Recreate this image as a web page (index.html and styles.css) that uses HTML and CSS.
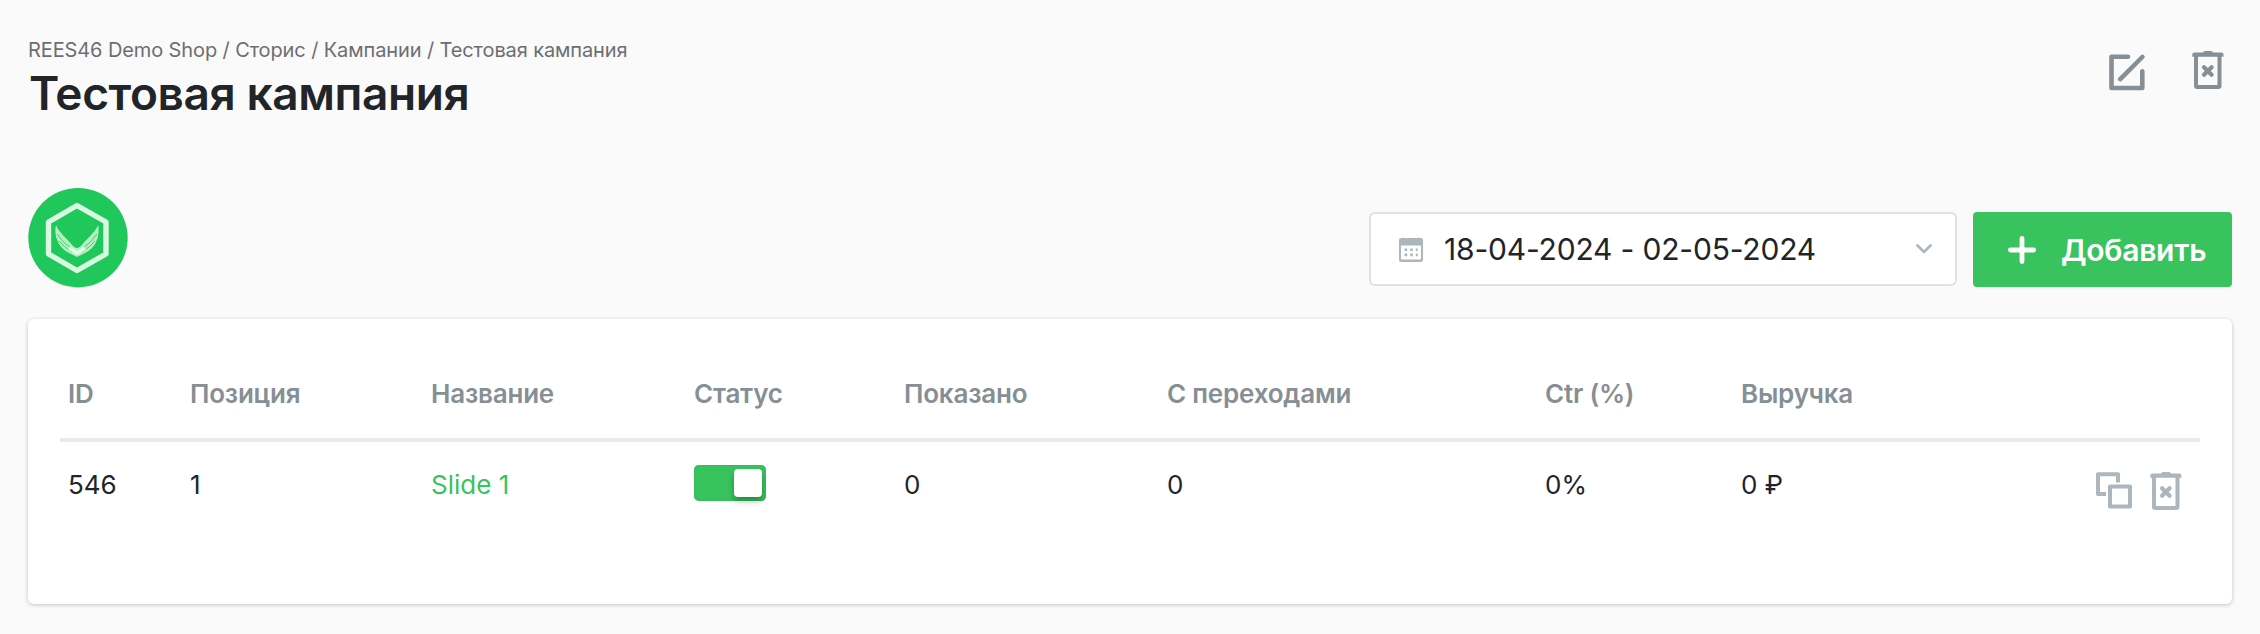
FILE: index.html
```
<!DOCTYPE html>
<html lang="ru">
<head>
<meta charset="utf-8">
<title>Тестовая кампания</title>
<link rel="stylesheet" href="styles.css">
</head>
<body>
<svg class="sprite" width="0" height="0">
  <symbol id="trash" viewBox="0 0 32 38">
    <path fill="currentColor" d="M11 1.5Q11.5 0 13 0H19Q20.5 0 21 1.5H29.5Q31.5 1.5 31.5 3.5V5.8H29.5V35Q29.5 38 26.5 38H5Q2 38 2 35V5.8H.3V3.5Q.3 1.5 2.3 1.5ZM6 5.8V34H25.5V5.8Z" fill-rule="evenodd"/>
    <path fill="none" stroke="currentColor" stroke-width="4.2" stroke-linecap="round" d="M12 16.2L19.6 23.8M19.6 16.2L12 23.8"/>
  </symbol>
</svg>
<header class="header">
  <div>
    <nav class="breadcrumbs">REES46 Demo Shop / Сторис / Кампании / Тестовая кампания</nav>
    <h1 class="title">Тестовая кампания</h1>
  </div>
  <div class="header-actions">
    <svg class="icon-edit" width="36" height="37" viewBox="0 0 36 37" fill="none" stroke="currentColor" stroke-linecap="round" stroke-linejoin="round"><path stroke-width="4.6" d="M19 2.8H2.5V34H33.3V17.3"/><path stroke-width="4.6" d="M11.3 25.2L33.3 3"/></svg>
    <svg class="icon-trash" width="32" height="38"><use href="#trash"/></svg>
  </div>
</header>
<section class="toolbar">
  <svg class="logo" width="100" height="100" viewBox="0 0 100 100">
    <circle cx="50" cy="49.7" r="49.7" fill="#20c75a"/>
    <path fill="none" stroke="#d9f9e0" stroke-width="5.4" stroke-linejoin="round" d="M49 17.5L78 34V66L49 82.5L20.5 66V34Z"/>
    <path fill="#b4f0c2" d="M28 37C31 45 40 51 45 58Q49 62 53 58C58 51 67 45 70 37Q72 46 68 54Q65 61 57 65L49 69L41 65Q33 61 30 54Q26 46 28 37Z"/>
    <path fill="none" stroke="#43cf70" stroke-width="1" d="M29 46Q34 54 44 61M31 53Q36 59 44 64M69 46Q64 54 54 61M67 53Q62 59 54 64"/>
    <path fill="none" stroke="#e4fbe9" stroke-width="3.5" d="M41 60L49 65L57 60"/>
  </svg>
  <div class="controls">
    <div class="datepicker">
      <svg class="icon-calendar" width="24" height="25" viewBox="0 0 24 25"><path fill="currentColor" fill-rule="evenodd" d="M3 1Q4 0 5 1H19Q20 0 21 1H22Q24 1 24 3V23Q24 25 22 25H2Q0 25 0 23V3Q0 1 2 1ZM2 8.5V21.5Q2 22.5 3 22.5H21Q22 22.5 22 21.5V8.5Z"/><path stroke="currentColor" stroke-width="2.6" stroke-dasharray="2.6 3" d="M5.6 12.8H18.7M5.6 17.9H18.7"/></svg>
      <span class="date">18-04-2024 - 02-05-2024</span>
      <svg class="icon-chevron" width="16" height="10" viewBox="0 0 16 10" fill="none" stroke="currentColor" stroke-width="2.6" stroke-linecap="round" stroke-linejoin="round"><path d="M1.5 1.5L8 8L14.5 1.5"/></svg>
    </div>
    <button class="add"><svg width="28" height="28" viewBox="0 0 28 28" stroke="#fff" stroke-width="4.8" stroke-linecap="round"><path d="M14 2.4V25.6M2.4 14H25.6"/></svg><span class="add-label">Добавить</span></button>
  </div>
</section>
<main class="card">
  <table class="table">
    <colgroup><col class="c-id"><col class="c-pos"><col class="c-name"><col class="c-status"><col class="c-shown"><col class="c-clicks"><col class="c-ctr"><col class="c-revenue"><col></colgroup>
    <thead><tr><th>ID</th><th>Позиция</th><th>Название</th><th>Статус</th><th>Показано</th><th>С переходами</th><th>Ctr (%)</th><th>Выручка</th><th></th></tr></thead>
    <tbody><tr>
      <td>546</td><td>1</td><td><a class="link">Slide 1</a></td><td><span class="toggle"><span class="knob"></span></span></td><td>0</td><td>0</td><td>0%</td><td>0 ₽</td>
      <td><div class="row-actions">
        <svg width="36" height="37" viewBox="0 0 36 37" fill="none" stroke="currentColor" stroke-width="4" stroke-linejoin="round"><path d="M10 22H2V2.3H22V10.5"/><rect x="14" y="14.5" width="20" height="20"/></svg>
        <svg width="32" height="38"><use href="#trash"/></svg>
      </div></td>
    </tr></tbody>
  </table>
</main>
</body>
</html>
```
FILE: styles.css
```
* { box-sizing: border-box; }
body {
  margin: 0;
  padding: 35px 28px 0;
  min-height: 634px;
  background: #fafafa;
  color: #212529;
  font-family: Inter, "Liberation Sans", sans-serif;
}
svg { display: block; flex: none; }
.sprite { position: absolute; }
.header { display: flex; justify-content: space-between; height: 153px; }
.breadcrumbs { font-size: 20px; line-height: 30px; letter-spacing: -.11px; color: #6c6f72; white-space: nowrap; }
.title { margin: 0; padding-left: 1px; font-size: 46px; line-height: 56px; font-weight: 600; letter-spacing: -.4px; white-space: nowrap; }
.header-actions { display: flex; gap: 47px; padding: 16px 8px 0 0; color: #868e96; }
.icon-edit { margin-top: 3px; }
.toolbar { display: flex; justify-content: space-between; height: 131px; }
.controls { display: flex; gap: 16px; padding-top: 24px; }
.datepicker {
  display: flex;
  align-items: center;
  width: 588px;
  height: 74px;
  padding: 0 23px 0 28px;
  border: 2px solid #dee2e6;
  border-radius: 6px;
  background: #fff;
}
.icon-calendar { color: #adb5bd; }
.date { flex: 1; margin-left: 21px; font-size: 30px; line-height: 40px; letter-spacing: -.18px; white-space: nowrap; }
.icon-chevron { color: #adb5bd; }
.add {
  display: flex;
  align-items: center;
  width: 259px;
  height: 75px;
  padding: 0 0 0 35px;
  border: 0;
  border-radius: 4px;
  background: #38c35f;
  color: #fff;
  font: 600 30px/40px Inter, "Liberation Sans", sans-serif;
}
.add-label { margin-left: 25px; letter-spacing: -.25px; }
.card {
  height: 285px;
  padding: 43px 32px 0;
  border-radius: 6px;
  background: #fff;
  box-shadow: 0 1px 4px rgba(0, 0, 0, .22);
}
.table { width: 2140px; table-layout: fixed; border-collapse: separate; border-spacing: 0; }
.c-id { width: 122px; }
.c-pos { width: 241px; }
.c-name { width: 263px; }
.c-status { width: 210px; }
.c-shown { width: 263px; }
.c-clicks { width: 378px; }
.c-ctr { width: 196px; }
.c-revenue { width: 196px; }
th {
  height: 80px;
  padding: 0 8px 24px;
  border-bottom: 4px solid #e9ecef;
  color: #868e96;
  font-size: 26px;
  line-height: 40px;
  font-weight: 600;
  letter-spacing: -.2px;
  text-align: left;
  vertical-align: bottom;
  white-space: nowrap;
}
td { padding: 23px 8px 0; font-size: 26px; line-height: 40px; vertical-align: top; white-space: nowrap; }
.link { color: #38c35f; }
.toggle {
  display: flex;
  justify-content: flex-end;
  width: 72px;
  height: 36px;
  padding: 4px;
  border-radius: 5px;
  background: #38c35f;
  box-shadow: inset 0 0 2px #2aa850;
}
.knob { width: 28px; height: 28px; border-radius: 4px; background: #fff; box-shadow: 0 4px 6px rgba(0, 0, 0, .3); }
.row-actions { display: flex; justify-content: flex-end; gap: 18px; padding: 7px 10px 0 0; color: #adb5bd; }
```
